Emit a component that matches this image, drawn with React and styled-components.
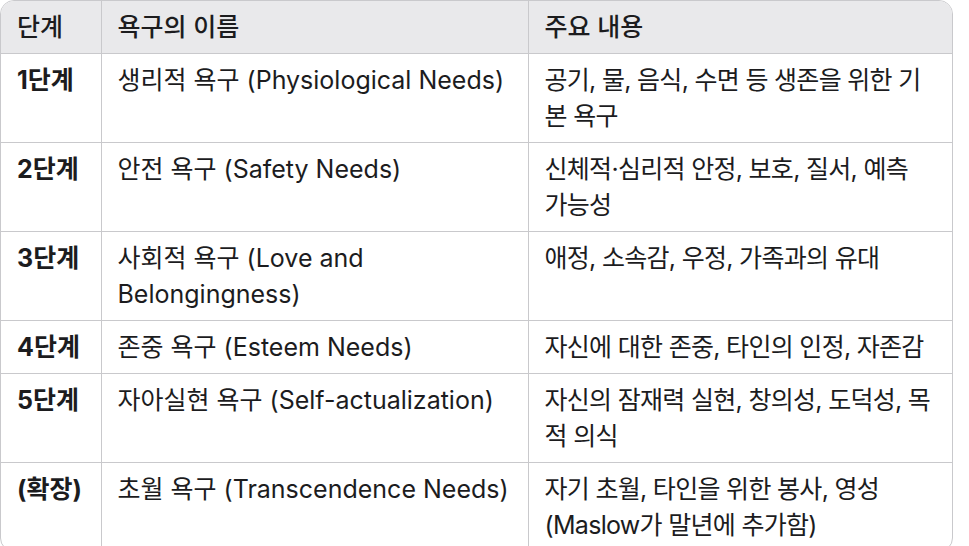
import React from "react";
import styled, { createGlobalStyle } from "styled-components";

const GlobalStyle = createGlobalStyle`
  html, body {
    margin: 0;
    padding: 0;
    background: #ffffff;
  }
  body {
    font-family: "Inter", "Noto Sans CJK KR", "Noto Sans", sans-serif;
    color: #1c1c1e;
  }
`;

const Frame = styled.div`
  width: 953px;
  border: 1px solid #c9c9cc;
  border-radius: 14px;
  overflow: hidden;
  box-sizing: border-box;
`;

const Table = styled.table`
  width: 100%;
  border-collapse: collapse;
  table-layout: fixed;
  font-size: 25px;
  line-height: 36px;
`;

const Col = styled.col`
  width: ${(p) => p.$w}px;
`;

const HeadCell = styled.th`
  background: #e9e9eb;
  font-weight: 500;
  text-align: left;
  padding: 8px 16px;
  border-bottom: 1px solid #c9c9cc;
  border-left: 1px solid #c9c9cc;
  &:first-child {
    border-left: none;
  }
`;

const Cell = styled.td`
  vertical-align: top;
  text-align: left;
  padding: 8px 16px;
  border-top: 1px solid #c9c9cc;
  border-left: 1px solid #c9c9cc;
  font-weight: ${(p) => (p.$bold ? 700 : 400)};
  letter-spacing: ${(p) => (p.$tight ? "-0.7px" : "normal")};
  &:first-child {
    border-left: none;
  }
`;

const Row = styled.tr`
  &:first-child ${Cell} {
    border-top: none;
  }
`;

const rows = [
  ["1단계", "생리적 욕구 (Physiological Needs)", "공기, 물, 음식, 수면 등 생존을 위한 기본 욕구"],
  ["2단계", "안전 욕구 (Safety Needs)", "신체적·심리적 안정, 보호, 질서, 예측 가능성"],
  ["3단계", "사회적 욕구 (Love and Belongingness)", "애정, 소속감, 우정, 가족과의 유대"],
  ["4단계", "존중 욕구 (Esteem Needs)", "자신에 대한 존중, 타인의 인정, 자존감"],
  ["5단계", "자아실현 욕구 (Self-actualization)", "자신의 잠재력 실현, 창의성, 도덕성, 목적 의식"],
  ["(확장)", "초월 욕구 (Transcendence Needs)", "자기 초월, 타인을 위한 봉사, 영성 (Maslow가 말년에 추가함)"],
];

export default function App() {
  return (
    <>
      <GlobalStyle />
      <Frame>
        <Table>
          <colgroup>
            <Col $w={100} />
            <Col $w={427} />
            <Col $w={424} />
          </colgroup>
          <thead>
            <tr>
              <HeadCell>단계</HeadCell>
              <HeadCell>욕구의 이름</HeadCell>
              <HeadCell>주요 내용</HeadCell>
            </tr>
          </thead>
          <tbody>
            {rows.map((r) => (
              <Row key={r[0]}>
                <Cell $bold>{r[0]}</Cell>
                <Cell>{r[1]}</Cell>
                <Cell $tight>{r[2]}</Cell>
              </Row>
            ))}
          </tbody>
        </Table>
      </Frame>
    </>
  );
}
